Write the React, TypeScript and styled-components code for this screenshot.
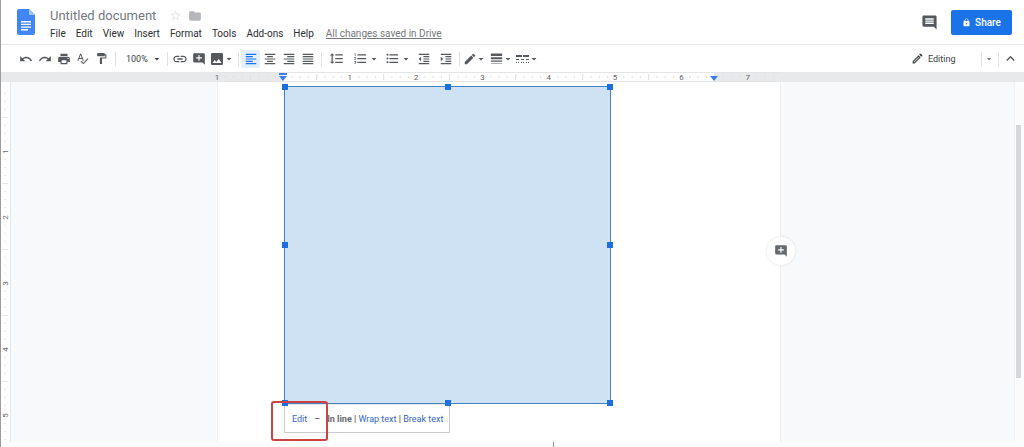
import React from 'react';
import styled, { createGlobalStyle } from 'styled-components';
import {
  MdAddComment,
  MdArrowDropDown,
  MdComment,
  MdEdit,
  MdExpandLess,
  MdFolder,
  MdFormatAlignCenter,
  MdFormatAlignJustify,
  MdFormatAlignLeft,
  MdFormatAlignRight,
  MdFormatIndentDecrease,
  MdFormatIndentIncrease,
  MdFormatLineSpacing,
  MdFormatListBulleted,
  MdFormatListNumbered,
  MdFormatPaint,
  MdImage,
  MdLineWeight,
  MdLink,
  MdLock,
  MdOutlineEdit,
  MdPrint,
  MdRedo,
  MdSpellcheck,
  MdStarBorder,
  MdUndo,
} from 'react-icons/md';

const GlobalStyle = createGlobalStyle`
  *, *::before, *::after { box-sizing: border-box; }
  body {
    margin: 0;
    background: #fff;
    color: #3c4043;
    font-family: Roboto, "Liberation Sans", sans-serif;
  }
  button, select { font: inherit; color: inherit; }
`;

const Shell = styled.div`
  min-height: 100vh;
  display: flex;
  flex-direction: column;
  border-left: 1px solid #9c9c9c;
`;

const Header = styled.header`
  display: flex;
  align-items: flex-start;
  height: 45px;
  padding: 8px 12px 0 16px;
  border-bottom: 1px solid #e6e7e9;
`;

const Logo = styled.svg`
  flex: none;
  width: 18px;
  height: 26px;
  margin-top: 1px;
`;

const Heading = styled.div`
  flex: 1;
  padding-left: 15px;
`;

const TitleRow = styled.div`
  display: flex;
  align-items: center;
  gap: 6px;
  height: 15px;
`;

const Title = styled.h1`
  margin: 0 7px 0 0;
  font-size: 13px;
  line-height: 15px;
  font-weight: 400;
  color: #74777b;
`;

const MenuBar = styled.nav`
  display: flex;
  align-items: center;
  gap: 10px;
  margin-top: 4px;
`;

const MenuItem = styled.button`
  padding: 0;
  border: 0;
  background: none;
  font-size: 10px;
  line-height: 14px;
  color: #2b2d30;
`;

const SavedLink = styled.a`
  margin-left: 2px;
  font-size: 10px;
  line-height: 14px;
  color: #74777b;
`;

const PlainButton = styled.button<{ $tone?: string }>`
  display: flex;
  padding: 0;
  border: 0;
  background: none;
  color: ${(p) => p.$tone ?? '#55585c'};
`;

const HeaderActions = styled.div`
  display: flex;
  align-items: center;
  gap: 13px;
  padding-top: 2px;
`;

const ShareButton = styled.button`
  display: flex;
  align-items: center;
  justify-content: center;
  gap: 4px;
  width: 61px;
  height: 25px;
  padding: 0;
  border: 0;
  border-radius: 2px;
  background: #1a73e8;
  color: #fff;
  font-size: 10px;
  font-weight: 500;
`;

const Toolbar = styled.div`
  display: flex;
  align-items: center;
  height: 27px;
  padding: 0 4px 0 15px;
`;

const Tool = styled.button<{ $width?: number; $active?: boolean }>`
  display: flex;
  flex: none;
  align-items: center;
  justify-content: center;
  width: ${(p) => p.$width ?? 19}px;
  height: 18px;
  padding: 0;
  border: 0;
  border-radius: 2px;
  background: ${(p) => (p.$active ? '#e3effd' : 'none')};
  color: ${(p) => (p.$active ? '#1a73e8' : '#55585c')};
`;

const DropTool = styled(Tool)<{ $wide?: boolean }>`
  justify-content: flex-start;
  width: ${(p) => (p.$wide ? 32 : 26)}px;
  padding-left: ${(p) => (p.$wide ? 5 : 1)}px;
  gap: ${(p) => (p.$wide ? 2 : 0)}px;

  svg { flex: none; }
  svg:last-child { margin: 0 -2px; }
`;

const Divider = styled.span`
  flex: none;
  width: 1px;
  height: 14px;
  margin: 0 2px 0 4px;
  background: #e0e1e3;
`;

const ZoomBox = styled.label`
  display: flex;
  align-items: center;
  flex: none;
  width: 45px;
  padding-left: 8px;
`;

const ZoomSelect = styled.select`
  width: 26px;
  padding: 0;
  border: 0;
  appearance: none;
  background: none;
  font-size: 9px;
  line-height: 14px;
`;

const Spacer = styled.span`
  flex: 1;
`;

const ModeButton = styled.button`
  display: flex;
  align-items: center;
  gap: 4px;
  width: 66px;
  padding: 0;
  border: 0;
  background: none;
  font-size: 9px;
  line-height: 14px;
`;

const RulerBar = styled.div`
  display: flex;
  justify-content: center;
  height: 10px;
  padding-right: 27px;
  background: #e8e9eb;
`;

const Ruler = styled.div`
  position: relative;
  display: grid;
  grid-template-columns: repeat(8, 2fr) 1fr;
  width: 564px;
  background: linear-gradient(to right, #e8e9eb 66px, #fff 66px, #fff 497px, #e8e9eb 497px);
  border-bottom: 1px solid #e4e5e7;
  border-top: 1px solid #e4e5e7;
`;

const Ticks = styled.svg`
  display: block;
  width: 100%;
  height: 8px;
`;

const RulerCell = styled.div`
  position: relative;
  min-width: 0;
`;

const RulerNumber = styled.span`
  position: absolute;
  left: -4px;
  top: 0;
  width: 8px;
  text-align: center;
  font-size: 8px;
  line-height: 9px;
  color: #5f6368;
`;

const Marker = styled.svg<{ $at: string }>`
  position: absolute;
  left: ${(p) => p.$at};
  top: 0;
  width: 10px;
  height: 9px;
  margin-left: -5px;
`;

const Workspace = styled.main`
  flex: 1;
  display: flex;
  background: #f8f9fa;
`;

const SideRuler = styled.div`
  display: flex;
  flex-direction: column;
  flex: none;
  width: 10px;
  padding-top: 3px;
  background: #fff;
  border-right: 1px solid #e6e7e9;
`;

const SideCell = styled.div`
  position: relative;
  flex: 0 0 66px;

  &:last-child { flex: 1 1 0; }
`;

const SideTicks = styled.svg`
  position: absolute;
  left: 0;
  top: 0;
  width: 9px;
  height: 100%;
`;

const SideNumber = styled(RulerNumber)`
  left: 0;
  top: -4px;
  transform: rotate(-90deg);
`;

const Canvas = styled.div`
  flex: 1;
  display: flex;
  justify-content: center;
  padding-right: 27px;
`;

const Page = styled.article`
  position: relative;
  width: 564px;
  padding: 4px 0 9px 66px;
  background: #fff;
  border-left: 1px solid #eeeff1;
  border-right: 1px solid #eeeff1;
`;

const Drawing = styled.div`
  position: relative;
  z-index: 1;
  width: 327px;
  height: 318px;
  border: 1px solid #4482c4;
  background: #cfe2f3;
`;

const Handle = styled.span<{ $x: number; $y: number }>`
  position: absolute;
  left: ${(p) => p.$x}%;
  top: ${(p) => p.$y}%;
  width: 6px;
  height: 6px;
  margin: -3px 0 0 -3px;
  background: #1b6fde;
`;

const ShapeBar = styled.div`
  position: relative;
  display: flex;
  align-items: center;
  width: 166px;
  height: 29px;
  padding-left: 7px;
  border: 1px solid #c9cbce;
  border-top-color: #e6e7e9;
  background: #fff;
  font-size: 9px;
  line-height: 12px;
  white-space: pre;

  a { color: #3367b8; text-decoration: none; }
  b { font-weight: 700; color: #66696d; }
`;

const Dash = styled.span`
  margin: 0 7px;
`;

const Highlight = styled.span`
  position: absolute;
  z-index: 2;
  left: -14px;
  top: -4px;
  width: 57px;
  height: 40px;
  border: 2px solid #cf4244;
  border-radius: 3px;
`;

const CommentBubble = styled.button`
  position: absolute;
  right: -15px;
  top: 155px;
  display: flex;
  align-items: center;
  justify-content: center;
  width: 28px;
  height: 28px;
  padding: 0;
  border: 0;
  border-radius: 50%;
  background: #fff;
  box-shadow: 0 0 3px rgba(60, 64, 67, 0.16);
  color: #66696d;
`;

const ScrollTrack = styled.div`
  flex: none;
  display: flex;
  flex-direction: column;
  width: 10px;
  padding: 43px 3px 0 1px;
  background: #fbfbfc;
  border-left: 1px solid #f1f2f3;
`;

const ScrollThumb = styled.div`
  height: 253px;
  background: #d5d7da;
`;

const Footer = styled.footer`
  display: flex;
  justify-content: center;
  height: 5px;
  padding-left: 82px;
  background: #fdfdfd;
`;

const Caret = styled.span`
  width: 1px;
  background: #8a8c8f;
`;

const eighths = [1, 2, 3, 4, 5, 6, 7];

const RulerTicks = ({ half }: { half?: boolean }) => (
  <Ticks aria-hidden="true">
    {(half ? [1, 2, 3] : eighths).map((n) => (
      <rect
        key={n}
        x={`${n * (half ? 25 : 12.5)}%`}
        y={n === 4 ? 1 : 3}
        width="1"
        height={n === 4 ? 6 : 2}
        fill="#dcdee0"
      />
    ))}
  </Ticks>
);

const DashIcon = () => (
  <svg width="15" height="14" viewBox="0 0 15 14" fill="currentColor" aria-hidden="true">
    <path d="M1 3h6v2H1zM8 3h6v2H8zM1 7h3v1H1zM6 7h3v1H6zM11 7h3v1h-3zM1 10h1v1H1zM3 10h1v1H3zM6 10h1v1H6zM8 10h1v1H8zM11 10h1v1h-1zM13 10h1v1h-1z" />
  </svg>
);

const rulerLabels = ['1', '', '1', '2', '3', '4', '5', '6', '7'];

const handles: [number, number][] = [
  [0, 0], [50, 0], [100, 0],
  [0, 50], [100, 50],
  [0, 100], [50, 100], [100, 100],
];

const menus = ['File', 'Edit', 'View', 'Insert', 'Format', 'Tools', 'Add-ons', 'Help'];

export default function App() {
  return (
    <Shell>
      <GlobalStyle />
      <Header>
        <Logo viewBox="0 0 18 26" aria-label="Docs">
          <path d="M2 0h10l6 6v18a2 2 0 0 1-2 2H2a2 2 0 0 1-2-2V2a2 2 0 0 1 2-2z" fill="#4285f4" />
          <path d="M12 0l6 6h-6z" fill="#a1c2fa" />
          <path d="M4 12h10v1.4H4zM4 14.7h10v1.4H4zM4 17.4h10v1.4H4zM4 20h7v1.4H4z" fill="#fff" />
        </Logo>
        <Heading>
          <TitleRow>
            <Title>Untitled document</Title>
            <PlainButton aria-label="Star" $tone="#e2e4e6"><MdStarBorder size={13} /></PlainButton>
            <PlainButton aria-label="Move to folder" $tone="#b4b6b9"><MdFolder size={14} /></PlainButton>
          </TitleRow>
          <MenuBar>
            {menus.map((m) => <MenuItem key={m}>{m}</MenuItem>)}
            <SavedLink href="#history">All changes saved in Drive</SavedLink>
          </MenuBar>
        </Heading>
        <HeaderActions>
          <PlainButton aria-label="Comments"><MdComment size={17} /></PlainButton>
          <ShareButton><MdLock size={9} />Share</ShareButton>
        </HeaderActions>
      </Header>

      <Toolbar role="toolbar">
        <Tool aria-label="Undo"><MdUndo size={14} /></Tool>
        <Tool aria-label="Redo"><MdRedo size={14} /></Tool>
        <Tool aria-label="Print"><MdPrint size={14} /></Tool>
        <Tool aria-label="Spelling"><MdSpellcheck size={13} /></Tool>
        <Tool aria-label="Paint format"><MdFormatPaint size={13} /></Tool>
        <Divider />
        <ZoomBox>
          <ZoomSelect aria-label="Zoom" defaultValue="100%"><option>100%</option></ZoomSelect>
          <MdArrowDropDown size={12} />
        </ZoomBox>
        <Divider />
        <Tool aria-label="Link"><MdLink size={16} /></Tool>
        <Tool aria-label="Add comment"><MdAddComment size={14} /></Tool>
        <DropTool aria-label="Image"><MdImage size={16} /><MdArrowDropDown size={12} /></DropTool>
        <Divider />
        <Tool aria-label="Align left" $active><MdFormatAlignLeft size={14} /></Tool>
        <Tool aria-label="Align center"><MdFormatAlignCenter size={14} /></Tool>
        <Tool aria-label="Align right"><MdFormatAlignRight size={14} /></Tool>
        <Tool aria-label="Justify"><MdFormatAlignJustify size={14} /></Tool>
        <Divider />
        <Tool aria-label="Line spacing" $width={24}><MdFormatLineSpacing size={15} /></Tool>
        <DropTool aria-label="Numbered list" $wide><MdFormatListNumbered size={15} /><MdArrowDropDown size={12} /></DropTool>
        <DropTool aria-label="Bulleted list" $wide><MdFormatListBulleted size={15} /><MdArrowDropDown size={12} /></DropTool>
        <Tool aria-label="Decrease indent" $width={24}><MdFormatIndentDecrease size={14} /></Tool>
        <Tool aria-label="Increase indent"><MdFormatIndentIncrease size={14} /></Tool>
        <Divider />
        <DropTool aria-label="Border color"><MdEdit size={14} /><MdArrowDropDown size={12} /></DropTool>
        <DropTool aria-label="Border weight"><MdLineWeight size={15} /><MdArrowDropDown size={12} /></DropTool>
        <DropTool aria-label="Border dash"><DashIcon /><MdArrowDropDown size={12} /></DropTool>
        <Spacer />
        <ModeButton><MdOutlineEdit size={13} />Editing</ModeButton>
        <Divider />
        <Tool aria-label="Mode menu" $width={10}><MdArrowDropDown size={12} /></Tool>
        <Divider />
        <Tool aria-label="Hide menus"><MdExpandLess size={17} /></Tool>
      </Toolbar>

      <RulerBar>
        <Ruler>
          {rulerLabels.map((label, i) => (
            <RulerCell key={i}>
              {label && <RulerNumber>{label}</RulerNumber>}
              <RulerTicks half={i === 8} />
            </RulerCell>
          ))}
          <Marker $at="66px" viewBox="0 0 10 9" aria-hidden="true">
            <path d="M1 0h8v2H1zM1 3h8L5 8z" fill="#3d7fe6" />
          </Marker>
          <Marker $at="497px" viewBox="0 0 10 9" aria-hidden="true">
            <path d="M1 3h8L5 8z" fill="#3d7fe6" />
          </Marker>
        </Ruler>
      </RulerBar>

      <Workspace>
        <SideRuler>
          {['', '1', '2', '3', '4', '5'].map((label) => (
            <SideCell key={label}>
              {label && <SideNumber>{label}</SideNumber>}
              <SideTicks aria-hidden="true">
                {eighths.map((n) => (
                  <rect key={n} x={n === 4 ? 1 : 3} y={n * 8} width={n === 4 ? 6 : 2} height="1" fill="#e4e5e7" />
                ))}
              </SideTicks>
            </SideCell>
          ))}
        </SideRuler>
        <Canvas>
          <Page>
            <Drawing>
              {handles.map(([x, y]) => <Handle key={`${x}-${y}`} $x={x} $y={y} />)}
            </Drawing>
            <ShapeBar>
              <a href="#edit">Edit</a>
              <Dash>–</Dash>
              <b>In line</b> | <a href="#wrap">Wrap text</a> | <a href="#break">Break text</a>
              <Highlight />
            </ShapeBar>
            <CommentBubble aria-label="Add comment"><MdAddComment size={14} /></CommentBubble>
          </Page>
        </Canvas>
        <ScrollTrack><ScrollThumb /></ScrollTrack>
      </Workspace>
      <Footer><Caret /></Footer>
    </Shell>
  );
}
